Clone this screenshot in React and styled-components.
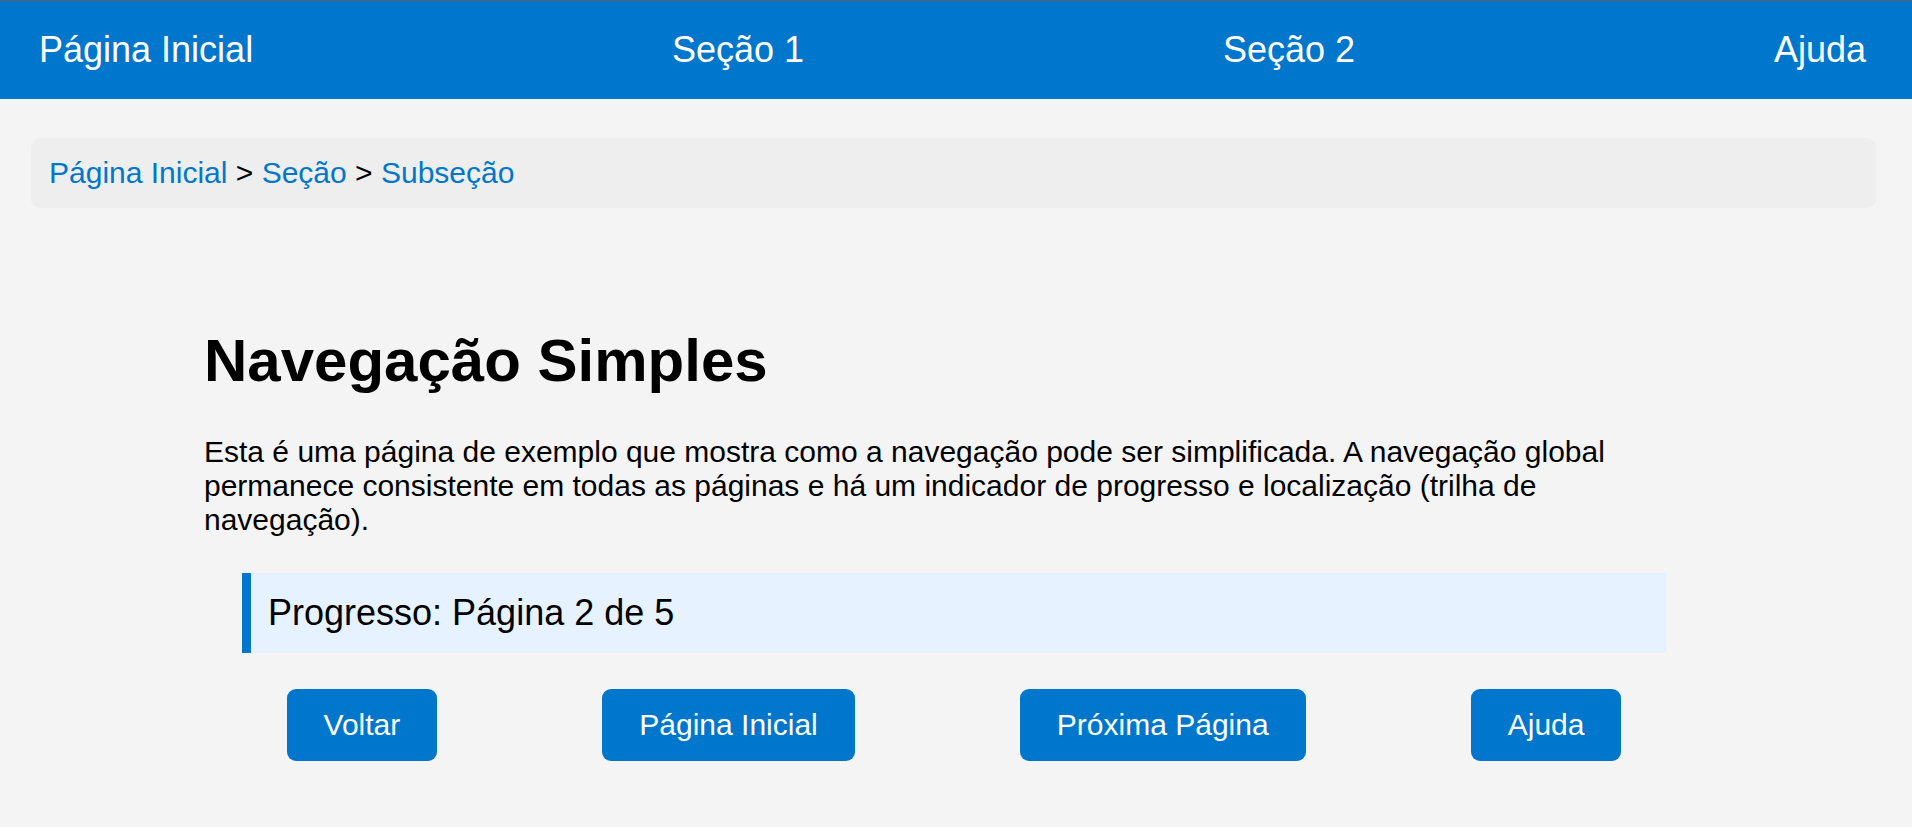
import React from "react";
import styled, { createGlobalStyle } from "styled-components";

const GlobalStyle = createGlobalStyle`
  html, body {
    margin: 0;
    padding: 0;
    background: #f4f4f4;
    font-family: "Liberation Sans", Arial, sans-serif;
    font-size: 30px;
    color: #000;
  }
`;

const TopNav = styled.header`
  background: #0077cc;
  border-top: 1px solid #56616b;
  padding: 28px 46px 28px 39px;
  display: flex;
  justify-content: space-between;
  align-items: center;
`;

const NavLink = styled.a`
  color: #fff;
  text-decoration: none;
  font-size: 36px;
  line-height: normal;
`;

const Breadcrumb = styled.nav`
  margin: 39px 36px 0 31px;
  padding: 18px 18px;
  background: #eeeeee;
  border-radius: 9px;
  font-size: 30px;
`;

const Crumb = styled.a`
  color: #0077cc;
  text-decoration: none;
`;

const Main = styled.main`
  width: 1500px;
  margin: 0 0 0 204px;
  padding-top: 78px;
`;

const Title = styled.h1`
  font-size: 60px;
  font-weight: bold;
  margin: 40px 0;
  line-height: normal;
`;

const Text = styled.p`
  font-size: 30px;
  margin: 0;
  line-height: normal;
`;

const Progress = styled.div`
  margin: 36px 38px;
  padding: 19px 17px;
  background: #e6f2ff;
  border-left: 9px solid #0077cc;
  font-size: 36px;
`;

const ButtonRow = styled.div`
  display: flex;
  justify-content: space-around;
  align-items: center;
`;

const Button = styled.button`
  background: #0077cc;
  color: #fff;
  border: none;
  border-radius: 9px;
  padding: 19px 37px;
  font-family: "Liberation Sans", Arial, sans-serif;
  font-size: 30px;
  line-height: normal;
  cursor: pointer;
`;

const navItems = ["Página Inicial", "Seção 1", "Seção 2", "Ajuda"];
const buttons = ["Voltar", "Página Inicial", "Próxima Página", "Ajuda"];

export default function App() {
  return (
    <>
      <GlobalStyle />
      <TopNav>
        {navItems.map(item => (
          <NavLink href="#" key={item}>
            {item}
          </NavLink>
        ))}
      </TopNav>
      <Breadcrumb>
        <Crumb href="#">Página Inicial</Crumb> &gt; <Crumb href="#">Seção</Crumb>{" "}
        &gt; <Crumb href="#">Subseção</Crumb>
      </Breadcrumb>
      <Main>
        <Title>Navegação Simples</Title>
        <Text>
          Esta é uma página de exemplo que mostra como a navegação pode ser
          simplificada. A navegação global permanece consistente em todas as
          páginas e há um indicador de progresso e localização (trilha de
          navegação).
        </Text>
        <Progress>Progresso: Página 2 de 5</Progress>
        <ButtonRow>
          {buttons.map(label => (
            <Button key={label}>{label}</Button>
          ))}
        </ButtonRow>
      </Main>
    </>
  );
}
